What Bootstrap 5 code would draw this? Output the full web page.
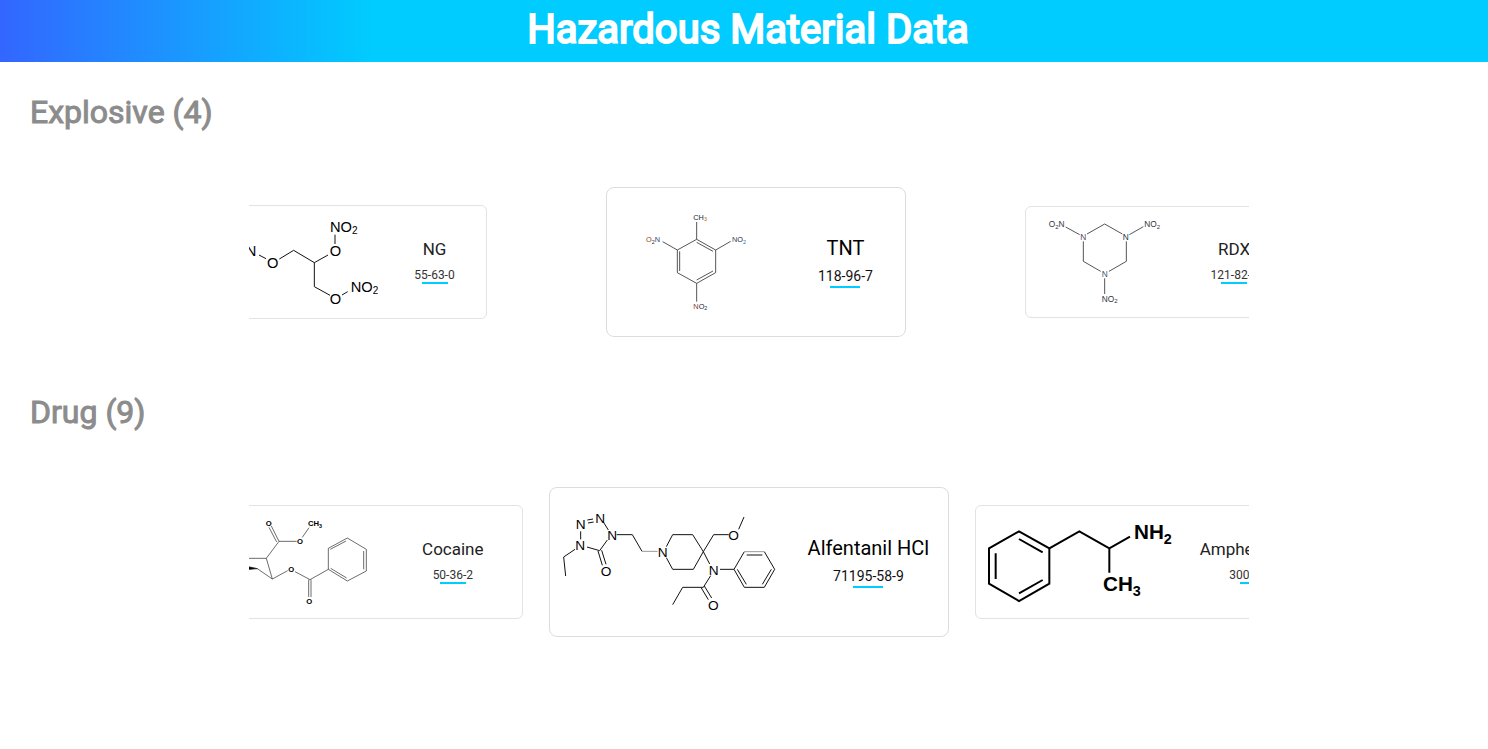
<!DOCTYPE html>
<html lang="en">
<head>
<meta charset="utf-8">
<meta name="viewport" content="width=device-width, initial-scale=1">
<title>Hazardous Material Data</title>
<link href="https://cdn.jsdelivr.net/npm/bootstrap@5.3.0/dist/css/bootstrap.min.css" rel="stylesheet">
<style>
body { font-family: Roboto, "Liberation Sans", sans-serif; color: #000; }
.page-head { background: linear-gradient(90deg, #36f 0%, #0cf 25%); height: 62px; padding-left: 8px; }
.page-head h1 { font-size: 40px; line-height: 60px; font-weight: 400; -webkit-text-stroke: 2px #fff; }
.group { padding-left: 10px; }
.group h2 { font-size: 32px; line-height: 40px; font-weight: 400; color: #8c8c8c; -webkit-text-stroke: 1px #8c8c8c; padding: 30px 20px 55px; }
.strip { max-width: 1000px; height: 150px; }
.group + .group { padding-top: 25px; }
.strip-wide { gap: 119px; }
.strip-tight { gap: 26px; }
.tile { border: 1px solid #e3e3e3; border-radius: 6px; height: 114px; }
.tile-main { border-color: #dcdcdc; border-radius: 8px; height: 150px; }
.w-ng { width: 273px; } .w-tnt { width: 300px; } .w-rdx { width: 259px; height: 112px; }
.w-side { width: 348px; } .w-alf { width: 400px; }
.caption-col { width: 40%; padding-bottom: 3px; }
.w-ng .caption-col, .w-rdx .caption-col { width: 38%; }
.tile h3 { font-size: 17px; line-height: 24px; font-weight: 400; color: #222; }
.tile p { font-size: 12px; line-height: 14px; padding-top: 7px; color: #333; }
.tile hr { width: 26px; height: 2px; background: #0cf; opacity: 1; border: 0; }
.tile-main h3 { font-size: 20px; line-height: 28px; color: #000; }
.tile-main p { font-size: 14px; line-height: 20px; padding-top: 4px; color: #111; }
.tile-main hr { width: 30px; }
svg text { font-family: "Liberation Sans", sans-serif; stroke: none; }
</style>
</head>
<body>
<header class="page-head text-white text-center">
  <h1 class="m-0">Hazardous Material Data</h1>
</header>
<main>
  <section class="group">
    <h2 class="m-0">Explosive (4)</h2>
    <div class="strip strip-wide d-flex justify-content-center align-items-center overflow-hidden mx-auto">
      <article class="tile w-ng d-flex flex-shrink-0">
        <svg width="163" height="112" viewBox="-75 33 489 336" fill="none" stroke="#111" stroke-width="3" role="img" aria-label="NG structure">
          <path d="M57 180L78 191M118 192L161 166L223 203L264 180M285 119V147M223 203V275L270 301M306 300L323 290"/>
          <g font-size="44" fill="#000"><text x="17" y="183">N</text><text x="81" y="219">O</text><text x="269" y="182">O</text><text x="269" y="328">O</text><text x="270" y="112">NO<tspan font-size="30" dy="6">2</tspan></text><text x="332" y="292">NO<tspan font-size="30" dy="6">2</tspan></text></g>
        </svg>
        <div class="caption-col ms-auto flex-shrink-0 d-flex flex-column justify-content-center align-items-center">
          <h3 class="m-0">NG</h3><p class="m-0">55-63-0</p><hr class="m-0">
        </div>
      </article>
      <article class="tile tile-main w-tnt d-flex flex-shrink-0">
        <svg width="178" height="148" viewBox="21 24 534 444" fill="none" stroke="#333" stroke-width="2.5" role="img" aria-label="TNT structure">
          <path d="M290 126V178L347 210V278L290 310L232 278V210L290 178M232 210L188 185M347 210L392 184M290 310V365M239 214V273M290 187L339 214M339 273L290 300"/>
          <g font-size="22" fill="#223"><text x="280" y="120">CH<tspan font-size="16" dy="4" fill="#b60">3</tspan></text><text x="138" y="187"><tspan fill="#842">O</tspan><tspan font-size="16" dy="4">2</tspan><tspan dy="-4" fill="#347">N</tspan></text><text x="396" y="187"><tspan fill="#347">N</tspan>O<tspan font-size="16" dy="4" fill="#07b">2</tspan></text><text x="280" y="386"><tspan fill="#743">N</tspan>O<tspan font-size="16" dy="4">2</tspan></text></g>
        </svg>
        <div class="caption-col ms-auto flex-shrink-0 d-flex flex-column justify-content-center align-items-center">
          <h3 class="m-0">TNT</h3><p class="m-0">118-96-7</p><hr class="m-0">
        </div>
      </article>
      <article class="tile w-rdx d-flex flex-shrink-0">
        <svg width="154" height="110" viewBox="18 36 462 330" fill="none" stroke="#333" stroke-width="2.5" role="img" aria-label="RDX structure">
          <path d="M137 96L179 119M201 117L254 87L307 117M328 119L370 95M190 139V199L242 229M319 139V199L267 229M254 250V297"/>
          <g font-size="25" fill="#334"><text x="86" y="97">O<tspan font-size="18" dy="5">2</tspan><tspan dy="-5">N</tspan></text><text x="373" y="97">NO<tspan font-size="18" dy="5">2</tspan></text><text x="181" y="136" fill="#546">N</text><text x="308" y="136" fill="#134">N</text><text x="245" y="246" fill="#357">N</text><text x="245" y="320">NO<tspan font-size="18" dy="5">2</tspan></text></g>
        </svg>
        <div class="caption-col ms-auto flex-shrink-0 d-flex flex-column justify-content-center align-items-center">
          <h3 class="m-0">RDX</h3><p class="m-0">121-82-4</p><hr class="m-0">
        </div>
      </article>
    </div>
  </section>
  <section class="group">
    <h2 class="m-0">Drug (9)</h2>
    <div class="strip strip-tight d-flex justify-content-center align-items-center overflow-hidden mx-auto">
      <article class="tile w-side d-flex flex-shrink-0">
        <svg width="206" height="112" viewBox="-192 33 618 336" fill="none" stroke="#222" stroke-width="2" role="img" aria-label="Cocaine structure">
          <path d="M-60 190H79L117 139L94 93M110 141L87 97M117 139H170M187 127L207 98M79 190L97 252L143 227M97 252L52 221L20 216M165 230L210 254L265 223V160L322 129L379 163V228L322 258L265 223M206 254V306M213 254V306M271 163L318 138M371 168V223M320 249L272 220"/>
          <path d="M20 214L52 221L20 224Z" fill="#000"/>
          <g font-size="23" font-weight="700" fill="#000"><text x="77" y="92">O</text><text x="171" y="147">O</text><text x="145" y="231">O</text><text x="199" y="327">O</text><text x="204" y="94">CH<tspan font-size="16" dy="5">3</tspan></text></g>
        </svg>
        <div class="caption-col ms-auto flex-shrink-0 d-flex flex-column justify-content-center align-items-center">
          <h3 class="m-0">Cocaine</h3><p class="m-0">50-36-2</p><hr class="m-0">
        </div>
      </article>
      <article class="tile tile-main w-alf d-flex flex-shrink-0">
        <svg width="238" height="148" viewBox="15 24 714 444" fill="none" stroke="#111" stroke-width="3" role="img" aria-label="Alfentanil HCl structure">
          <path d="M127 120L144 117M129 129L146 126M175 126L190 150M107 154V178M126 201L164 212L187 180M159 213L172 256M170 211L183 253M90 208L56 231L62 288M215 164H262L291 214M364 200L383 164H443L475 215L445 268H383L364 233M475 215L506 164H551M581 148L597 111M475 215L494 252M525 268H567L598 215M658 215L689 268L658 322H598L567 268M605 225H652M577 268L604 313M652 313L679 268M497 287L475 322H413L383 374M478 318L500 354M469 324L490 359"/>
          <path d="M291 214H338M598 215H658" stroke="#999"/>
          <g font-size="41" fill="#000"><text x="92" y="148">N</text><text x="151" y="130">N</text><text x="187" y="179">N</text><text x="91" y="211">N</text><text x="167" y="287">O</text><text x="338" y="232">N</text><text x="550" y="179">O</text><text x="491" y="285">N</text><text x="489" y="391">O</text></g>
        </svg>
        <div class="caption-col ms-auto flex-shrink-0 d-flex flex-column justify-content-center align-items-center">
          <h3 class="m-0">Alfentanil HCl</h3><p class="m-0">71195-58-9</p><hr class="m-0">
        </div>
      </article>
      <article class="tile w-side d-flex flex-shrink-0">
        <svg width="206" height="112" viewBox="18 33 618 336" fill="none" stroke="#000" stroke-width="6" role="img" aria-label="Amphetamine structure">
          <path d="M147 109L238 160V266L147 318L57 266V160ZM147 132L218 172M218 255L147 295M77 175V252M238 160L328 109L418 160L480 125M418 160V233"/>
          <g font-size="62" font-weight="700" fill="#000"><text x="492" y="131">NH<tspan font-size="43" dy="15">2</tspan></text><text x="399" y="288">CH<tspan font-size="43" dy="15">3</tspan></text></g>
        </svg>
        <div class="caption-col ms-auto flex-shrink-0 d-flex flex-column justify-content-center align-items-center">
          <h3 class="m-0">Amphetamine</h3><p class="m-0">300-62-9</p><hr class="m-0">
        </div>
      </article>
    </div>
  </section>
</main>
<script src="https://cdn.jsdelivr.net/npm/bootstrap@5.3.0/dist/js/bootstrap.bundle.min.js"></script>
</body>
</html>
